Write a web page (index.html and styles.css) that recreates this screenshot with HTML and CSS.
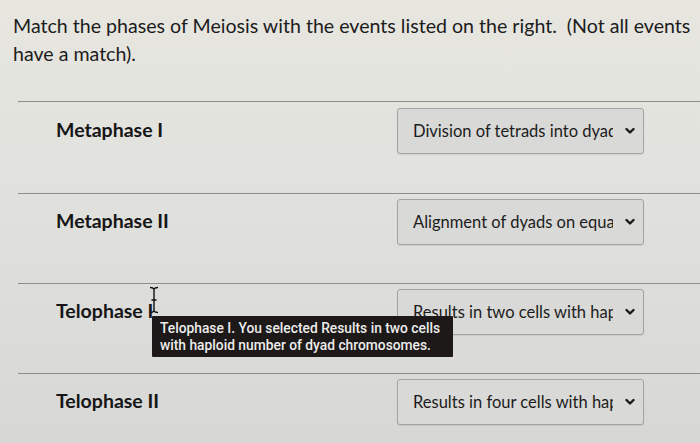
FILE: index.html
```html
<!DOCTYPE html>
<html lang="en">
<head>
<meta charset="utf-8">
<title>Meiosis matching</title>
<link rel="stylesheet" href="styles.css">
</head>
<body>
<main class="question">
  <p class="prompt">Match the phases of Meiosis with the events listed on the right.&nbsp; (Not all events have a match).</p>
  <div class="rows">
    <div class="row">
      <span class="term">Metaphase I</span>
      <div class="select">
        <span class="value">Division of tetrads into dyads</span>
        <svg class="chev" width="10" height="8" viewBox="0 0 10 8"><polyline points="1.5,2 5,5.5 8.5,2" fill="none" stroke="#1a1a1a" stroke-width="2.4" stroke-linecap="round" stroke-linejoin="round"/></svg>
      </div>
    </div>
    <div class="row">
      <span class="term">Metaphase II</span>
      <div class="select">
        <span class="value">Alignment of dyads on equatorial plate</span>
        <svg class="chev" width="10" height="8" viewBox="0 0 10 8"><polyline points="1.5,2 5,5.5 8.5,2" fill="none" stroke="#1a1a1a" stroke-width="2.4" stroke-linecap="round" stroke-linejoin="round"/></svg>
      </div>
    </div>
    <div class="row row-tip">
      <span class="term">Telophase I</span>
      <div class="select">
        <span class="value">Results in two cells with haploid number of dyad chromosomes</span>
        <svg class="chev" width="10" height="8" viewBox="0 0 10 8"><polyline points="1.5,2 5,5.5 8.5,2" fill="none" stroke="#1a1a1a" stroke-width="2.4" stroke-linecap="round" stroke-linejoin="round"/></svg>
      </div>
      <svg class="cursor" width="12" height="28" viewBox="0 0 12 28"><path d="M2 1.5 Q5 1.5 6 3 Q7 1.5 10 1.5 M6 3 V25 M2 26.5 Q5 26.5 6 25 Q7 26.5 10 26.5 M3.5 14 H8.5" fill="none" stroke="#111" stroke-width="1.4"/></svg>
      <div class="tooltip">Telophase I. You selected Results in two cells with haploid number of dyad chromosomes.</div>
    </div>
    <div class="row">
      <span class="term">Telophase II</span>
      <div class="select">
        <span class="value">Results in four cells with haploid number of monad chromosomes</span>
        <svg class="chev" width="10" height="8" viewBox="0 0 10 8"><polyline points="1.5,2 5,5.5 8.5,2" fill="none" stroke="#1a1a1a" stroke-width="2.4" stroke-linecap="round" stroke-linejoin="round"/></svg>
      </div>
    </div>
  </div>
</main>
</body>
</html>
```
FILE: styles.css
```css
html, body {
  margin: 0;
  padding: 0;
}
body {
  width: 700px;
  height: 443px;
  overflow: hidden;
  font-family: Lato, "Open Sans", sans-serif;
  color: #1c1c1c;
  background: linear-gradient(180deg, #e7e6df 0%, #e2e2de 35%, #dcdcda 70%, #d7d7d5 100%);
}
.question {
  padding: 12px 0 0 13px;
}
.prompt {
  margin: 0;
  font-size: 19.6px;
  line-height: 28px;
  width: 687px;
}
.rows {
  margin-top: 33px;
  margin-left: 5px;
}
.row {
  position: relative;
  display: flex;
  align-items: center;
  height: 90px;
  border-top: 1px solid #8e8e8c;
  box-sizing: border-box;
  padding-bottom: 38px;
  padding-top: 4px;
}
.row:first-child {
  height: 92px;
}
.term {
  width: 379px;
  padding-left: 38px;
  box-sizing: border-box;
  font-weight: 700;
  font-size: 19.5px;
  color: #161616;
  margin-top: -3px;
}
.select {
  display: flex;
  align-items: center;
  width: 247px;
  height: 46px;
  box-sizing: border-box;
  padding: 0 8px 0 15px;
  border: 1px solid #a3a3a1;
  border-radius: 3px;
  background: #d9d9d7;
  box-shadow: 0 1px 1px rgba(0,0,0,0.08);
}
.value {
  flex: 1;
  overflow: hidden;
  white-space: nowrap;
  font-size: 16.5px;
  margin-right: 12px;
}
.chev {
  flex: none;
}
.cursor {
  position: absolute;
  left: 130px;
  top: 2px;
}
.tooltip {
  position: absolute;
  left: 134px;
  top: 32px;
  width: 301px;
  box-sizing: border-box;
  padding: 4px 8px 4px 8px;
  background: #1c1918;
  color: #ececec;
  font-family: Roboto, "Liberation Sans", sans-serif;
  font-weight: 500;
  font-size: 13.8px;
  line-height: 16.5px;
  border-radius: 1px;
}
```
